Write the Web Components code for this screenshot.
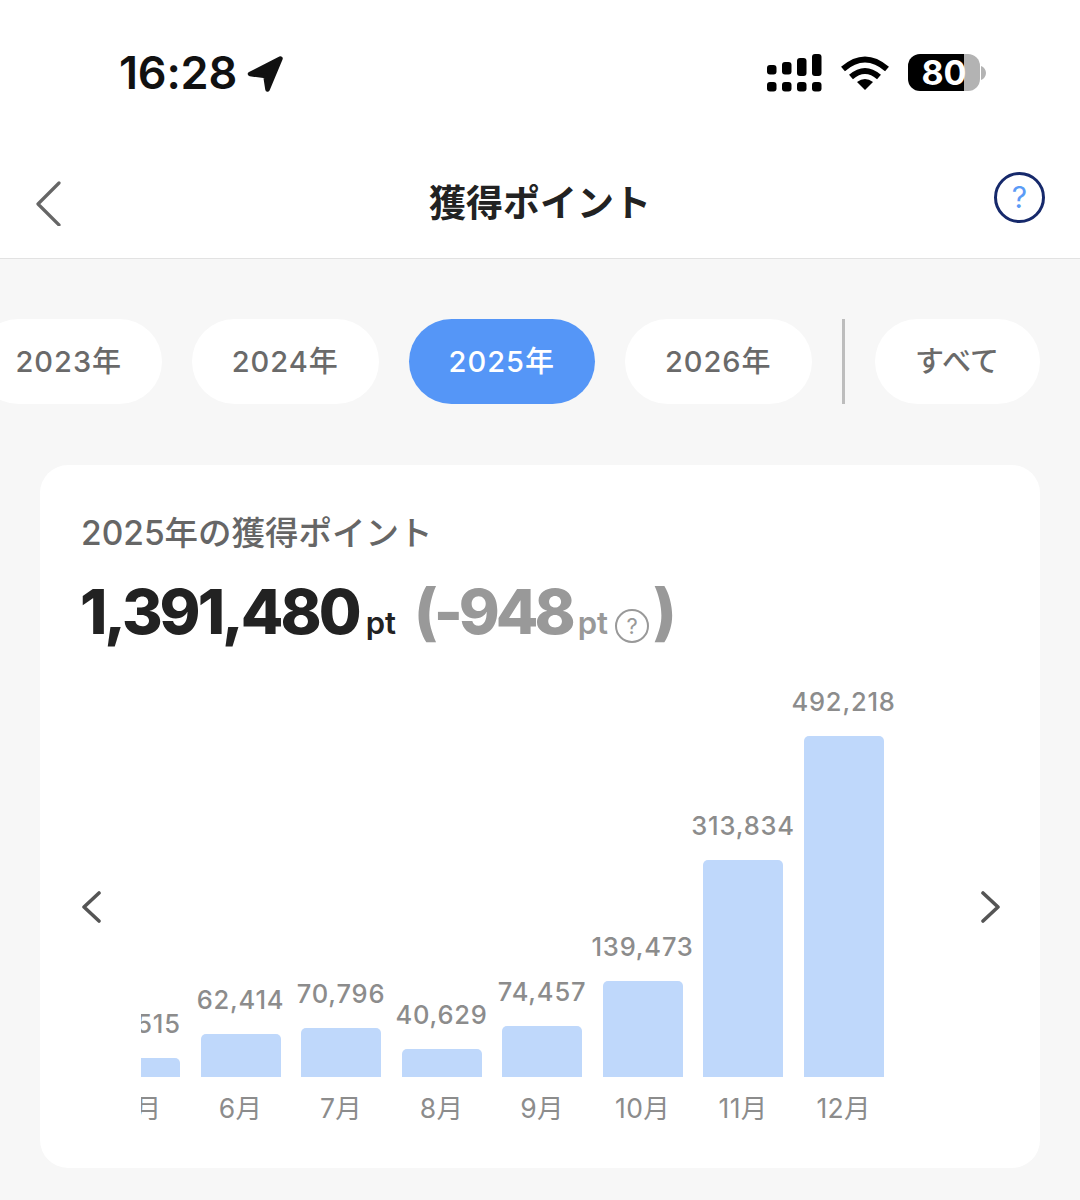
<!DOCTYPE html>
<html lang="ja"><head><meta charset="utf-8"><title>獲得ポイント</title>
<style>
html,body{margin:0;padding:0;background:#f7f7f7}
body{width:1080px;height:1200px;overflow:hidden;font-family:Inter,"Noto Sans CJK JP",sans-serif}
</style></head><body>
<status-bar></status-bar>
<app-header>獲得ポイント</app-header>
<year-tabs>
  <year-chip>2023年</year-chip>
  <year-chip>2024年</year-chip>
  <year-chip active>2025年</year-chip>
  <year-chip>2026年</year-chip>
  <year-chip slot="all">すべて</year-chip>
</year-tabs>
<points-card heading="2025年の獲得ポイント" total="1,391,480" diff="-948">
  <bar-col value="27,515" h="19" month="5月"></bar-col>
  <bar-col value="62,414" h="43" month="6月"></bar-col>
  <bar-col value="70,796" h="49" month="7月"></bar-col>
  <bar-col value="40,629" h="28" month="8月"></bar-col>
  <bar-col value="74,457" h="51" month="9月"></bar-col>
  <bar-col value="139,473" h="96" month="10月"></bar-col>
  <bar-col value="313,834" h="217" month="11月"></bar-col>
  <bar-col value="492,218" h="341" month="12月"></bar-col>
</points-card>
<script>
const FONT='Inter,"Noto Sans CJK JP",sans-serif';
function def(name,html){
  customElements.define(name,class extends HTMLElement{
    connectedCallback(){
      if(this.shadowRoot)return;
      const a={};for(const x of this.attributes)a[x.name]=x.value;
      const r=this.attachShadow({mode:'open'});
      r.innerHTML=typeof html==='function'?html(a):html;
    }
  });
}
def('status-bar',`<style>
:host{display:flex;box-sizing:border-box;height:130px;background:#fff;padding:54px 94px 0 119px;justify-content:space-between;align-items:flex-start;font-family:${FONT};color:#000}
.l{display:flex;align-items:center;height:37px;gap:10px}
.t{font-size:45px;font-weight:600;line-height:37px;letter-spacing:-.2px;color:#111}
.r{display:flex;align-items:center;height:37px;gap:19px}
.bat{display:flex;align-items:center;gap:1px}
.cell{width:72px;height:37px;border-radius:12px;display:flex;justify-content:center;align-items:center;background:linear-gradient(90deg,#000 56px,#b3b3b3 56px);color:#fff;font-size:34px;font-weight:700;line-height:37px}
svg{display:block}
</style>
<div class="l"><span class="t">16:28</span>
<svg width="37" height="37" viewBox="0 0 36 36" style="margin-top:2px"><path d="M32.500 3.500 3 18.500 18 20.500 20 33.500Z" fill="#111" stroke="#111" stroke-width="4.500" stroke-linejoin="round"/></svg></div>
<div class="r">
<svg width="55" height="38" viewBox="0 0 55 38" fill="#000"><rect x="0" y="11" width="9.500" height="9.500" rx="3"/><rect x="15" y="8" width="9.500" height="12.500" rx="3"/><rect x="30" y="4" width="9.500" height="18" rx="3"/><rect x="45" y="0" width="9.500" height="22" rx="3"/><rect x="0" y="28" width="9.500" height="9.500" rx="3"/><rect x="15" y="28" width="9.500" height="9.500" rx="3"/><rect x="30" y="28" width="9.500" height="9.500" rx="3"/><rect x="45" y="28" width="9.500" height="9.500" rx="3"/></svg>
<svg width="48" height="36" viewBox="0 0 48 36" fill="none" stroke="#000" stroke-width="6"><path d="M2 14Q24 -5 46 14"/><path d="M10 22Q24 10 38 22"/><path d="M24 35 16 27Q24 21 32 27Z" fill="#000" stroke="none"/></svg>
<div class="bat"><div class="cell">80</div><svg width="5" height="14" viewBox="0 0 5 14"><path d="M0 0C3 1 5 4 5 7S3 13 0 14Z" fill="#b3b3b3"/></svg></div>
</div>`);
def('app-header',`<style>
:host{display:grid;grid-template-columns:100px 1fr 100px;box-sizing:border-box;height:129px;background:#fff;border-bottom:1px solid #e2e2e2;padding:0 35px;align-items:start;font-family:${FONT}}
.b{padding-top:50px}
.c{text-align:center;font-size:37px;font-weight:700;line-height:50px;padding-top:49px;color:#222;margin:0 -35px}
.h{justify-self:end;margin-top:42px;box-sizing:border-box;width:51px;height:51px;border-radius:50%;border:3.500px solid #16296b;color:#5b9bf6;font-size:30px;line-height:44px;text-align:center;font-weight:400}
svg{display:block}
</style>
<div class="b"><svg width="30" height="46" viewBox="0 0 30 46" fill="none" stroke="#666" stroke-width="3.200" stroke-linecap="round" stroke-linejoin="round"><path d="M24 3 3 24 24 45"/></svg></div>
<div class="c"><slot></slot></div>
<div class="h">?</div>`);
def('year-tabs',`<style>
:host{display:flex;height:85px;margin:60px 0 0 -24.500px;width:1064.500px;align-items:stretch;gap:30px;font-family:${FONT}}
.d{width:3px;background:#bdbdbd}
</style><slot></slot><div class="d"></div><slot name="all"></slot>`);
def('year-chip',`<style>
:host{display:flex;box-sizing:border-box;flex:0 0 auto;width:186.500px;height:85px;padding-bottom:5px;border-radius:42.500px;background:#fff;color:#6a6a6a;align-items:center;justify-content:center;font-size:29px;font-weight:500;letter-spacing:1px;font-family:${FONT}}
:host([active]){background:#5596f7;color:#fff}
:host([slot=all]){width:165px;letter-spacing:0;font-weight:500}
</style><slot></slot>`);
def('points-card',a=>`<style>
:host{display:block;box-sizing:border-box;margin:61px 40px 0;width:1000px;height:703px;background:#fff;border-radius:28px;padding:46px 40px 0 42px;font-family:${FONT}}
.ti{font-size:33.500px;font-weight:500;line-height:44px;color:#666;margin-left:-1px}
.am{display:flex;align-items:baseline;margin-top:17px;height:80px;line-height:80px;font-weight:800;color:#222;margin-left:-2px}
.n{font-size:62px;letter-spacing:-3px}
.pt{font-size:31px;font-weight:600;margin-left:7px}
.g{color:#999;display:flex;align-items:baseline;margin-left:18px}
.p{font-size:62px}
.g .n{letter-spacing:-4px}
.g .pt{margin-left:6px}
.q{align-self:center;margin:16px 4px 0 7px;box-sizing:border-box;width:34px;height:34px;border-radius:50%;border:2px solid #999;font-size:22px;line-height:30px;text-align:center;font-weight:400;color:#999}
.ch{display:flex;align-items:center;margin-top:36px;height:436px}
.arrow{flex:0 0 auto;width:59px}
.vp{flex:1;height:436px;overflow:hidden;display:flex;justify-content:flex-end;align-items:flex-end;padding-right:87.200px;min-width:0}
svg{display:block}
</style>
<div class="ti">${a.heading}</div>
<div class="am"><span class="n">${a.total}</span><span class="pt">pt</span>
<span class="g"><span class="n">(${a.diff}</span><span class="pt">pt</span><span class="q">?</span><span class="p">)</span></span></div>
<div class="ch">
<div class="arrow"><svg width="22" height="34" viewBox="0 0 22 34" fill="none" stroke="#555" stroke-width="3.600" stroke-linecap="round" stroke-linejoin="round" style="margin-top:2px"><path d="M17 3 2 17 17 31"/></svg></div>
<div class="vp"><slot></slot></div>
<div class="arrow" style="width:19px"><svg width="22" height="34" viewBox="0 0 22 34" fill="none" stroke="#555" stroke-width="3.600" stroke-linecap="round" stroke-linejoin="round" style="margin-top:2px"><path d="M2 3 17 17 2 31"/></svg></div>
</div>`);
def('bar-col',a=>`<style>
:host{display:flex;flex:0 0 100.500px;width:100.500px;flex-direction:column;align-items:center;font-family:${FONT};color:#8c8c8c}
.v{font-size:25.500px;font-weight:500;line-height:30px;letter-spacing:.8px;margin-bottom:19px;white-space:nowrap}
.b{width:80px;height:${a.h}px;background:#bfd8fb;border-radius:5px 5px 0 0}
.m{font-size:26.500px;line-height:32px;margin-top:15px;white-space:nowrap;letter-spacing:.3px}
</style><div class="v">${a.value}</div><div class="b"></div><div class="m">${a.month}</div>`);
</script>
</body></html>
